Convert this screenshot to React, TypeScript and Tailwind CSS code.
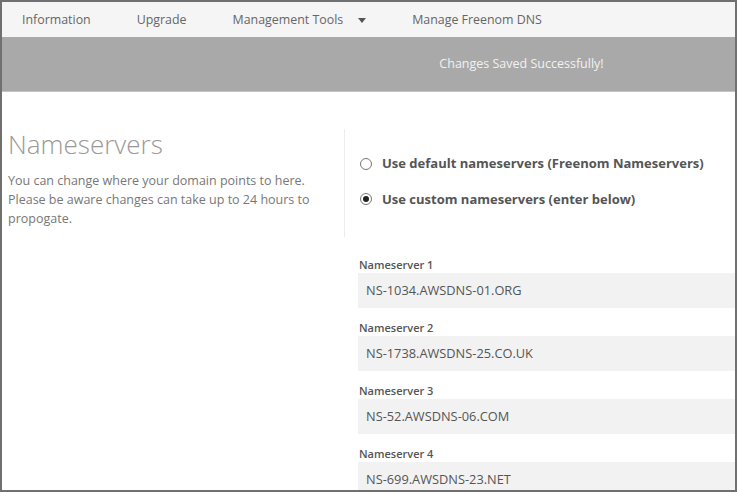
import React from "react";

const font = { fontFamily: '"Open Sans", "Noto Sans", sans-serif' };

function Radio({ checked }: { checked?: boolean }) {
  return (
    <span className="flex h-[12px] w-[12px] items-center justify-center rounded-full border border-[#777] bg-white">
      {checked && <span className="h-[6px] w-[6px] rounded-full bg-[#222]" />}
    </span>
  );
}

const servers = [
  "NS-1034.AWSDNS-01.ORG",
  "NS-1738.AWSDNS-25.CO.UK",
  "NS-52.AWSDNS-06.COM",
  "NS-699.AWSDNS-23.NET",
];

export default function App() {
  return (
    <div
      className="flex h-[492px] w-[737px] flex-col overflow-hidden border-2 border-[#707070] bg-white"
      style={font}
    >
      <nav className="flex h-[35px] shrink-0 items-center bg-[#f5f5f5] pl-[20px] pt-[2px] text-[12.4px] text-[#666]">
        <span>Information</span>
        <span className="ml-[46px]">Upgrade</span>
        <span className="ml-[46px] flex items-center">
          Management Tools
          <svg className="ml-[15px]" width="8" height="5" viewBox="0 0 8 5">
            <path d="M0 0 L8 0 L4 5 Z" fill="#555" />
          </svg>
        </span>
        <span className="ml-[46px]">Manage Freenom DNS</span>
      </nav>
      <div className="flex h-[55px] shrink-0 items-center justify-center border-b border-[#c4c4c4] bg-[#a9a9a9] pl-[306px] text-[12.5px] text-[#f2f2f2]">
        Changes Saved Successfully!
      </div>
      <div className="flex flex-1">
        <div className="w-[342px] shrink-0 pl-[6px] pt-[35px]">
          <h1 className="text-[26px] font-light leading-[34px] text-[#999]">Nameservers</h1>
          <p className="mt-[10px] text-[12.5px] leading-[19px] text-[#777]">
            You can change where your domain points to here. Please be aware changes can take up to 24 hours to propogate.
          </p>
        </div>
        <div className="flex-1">
          <div className="mt-[37px] flex h-[108px] flex-col justify-center border-l border-[#ececec] pl-[15px] text-[13px] font-bold text-[#555]">
            <div className="-mt-[3px] flex flex-col gap-[16px]">
              <label className="flex items-center gap-[10px]">
                <Radio />
                <span>Use default nameservers (Freenom Nameservers)</span>
              </label>
              <label className="flex items-center gap-[10px]">
                <Radio checked />
                <span>Use custom nameservers (enter below)</span>
              </label>
            </div>
          </div>
          <div className="mt-[20px] pl-[14px]">
            {servers.map((s, i) => (
              <div key={s} className="mb-[12px]">
                <div className="h-[16px] pl-[1px] text-[11px] font-semibold leading-[16px] text-[#555]">
                  Nameserver {i + 1}
                </div>
                <div className="flex h-[35px] items-center bg-[#f2f2f2] pl-[8px] text-[12.8px] text-[#555]">
                  {s}
                </div>
              </div>
            ))}
          </div>
        </div>
      </div>
    </div>
  );
}
